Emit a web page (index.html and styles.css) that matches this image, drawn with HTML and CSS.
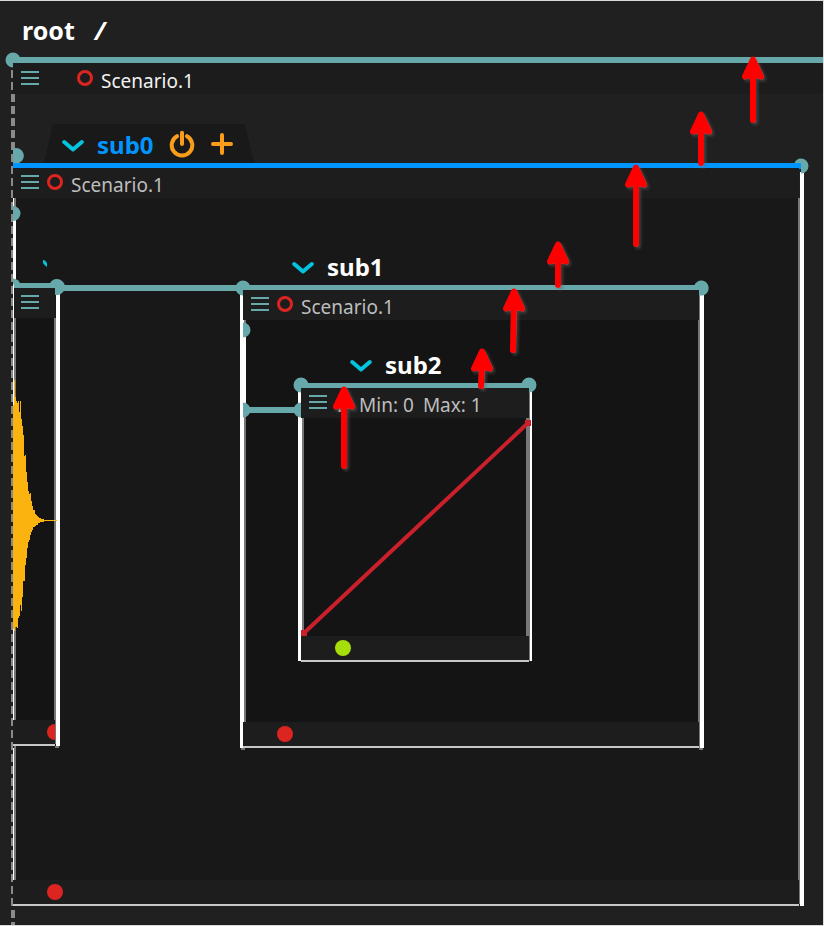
FILE: index.html
```html
<!DOCTYPE html>
<html lang="en">
<head>
<meta charset="utf-8">
<meta name="viewport" content="width=device-width, initial-scale=1">
<title>Scenario</title>
<link rel="stylesheet" href="styles.css">
</head>
<body>
<main class="app">
  <nav class="crumbs" aria-label="Path"><a href="#root">root</a><span>/</span></nav>

  <section class="root" id="root">
    <div class="rail"></div>
    <header class="head head-root">
      <button class="menu" aria-label="Menu"><i></i><i></i><i></i></button>
      <span class="ring"></span>
      <span class="name">Scenario.1</span>
    </header>
  </section>

  <div class="canvas">
    <article class="node sub0">
      <div class="tab tab-active">
        <button class="fold" aria-label="Fold sub0"><svg viewBox="0 0 22 14"><path d="M2.2 3 11 10.500 19.800 3"/></svg></button>
        <h2>sub0</h2>
        <button class="tool" aria-label="Power"><svg viewBox="0 0 26 28"><path d="M8 6.200A10.300 10.300 0 1 0 18 6.200M13 2.800V14"/></svg></button>
        <button class="tool" aria-label="Add"><svg viewBox="0 0 26 28"><path d="M4 14H22M13 5V23"/></svg></button>
      </div>
      <div class="rail rail-active"></div>
      <header class="head">
        <button class="menu" aria-label="Menu"><i></i><i></i><i></i></button>
        <span class="ring"></span>
        <span class="name">Scenario.1</span>
      </header>
      <div class="body"></div>
      <footer class="foot"><span class="led"></span></footer>
    </article>

    <article class="node sound">
      <div class="rail"></div>
      <header class="head">
        <button class="menu" aria-label="Menu"><i></i><i></i><i></i></button>
      </header>
      <div class="body body-deep"></div>
      <footer class="foot"><span class="led"></span></footer>
    </article>

    <article class="node sub1">
      <div class="tab">
        <button class="fold" aria-label="Fold sub1"><svg viewBox="0 0 22 14"><path d="M2.2 3 11 10.500 19.800 3"/></svg></button>
        <h2>sub1</h2>
      </div>
      <div class="rail"></div>
      <header class="head">
        <button class="menu" aria-label="Menu"><i></i><i></i><i></i></button>
        <span class="ring"></span>
        <span class="name">Scenario.1</span>
      </header>
      <div class="body body-deep"></div>
      <footer class="foot"><span class="led"></span></footer>
    </article>

    <article class="node sub2">
      <div class="tab">
        <button class="fold" aria-label="Fold sub2"><svg viewBox="0 0 22 14"><path d="M2.2 3 11 10.500 19.800 3"/></svg></button>
        <h2>sub2</h2>
      </div>
      <div class="rail"></div>
      <header class="head">
        <button class="menu" aria-label="Menu"><i></i><i></i><i></i></button>
        <span class="name range"><span>.</span><span>Min: 0</span><span>Max: 1</span></span>
      </header>
      <div class="body body-deep"></div>
      <footer class="foot"><span class="led led-ok"></span></footer>
    </article>

    <svg class="wires" width="824" height="926" aria-hidden="true">
      <defs>
        <filter id="shade" x="-50%" y="-20%" width="220%" height="150%">
          <feDropShadow dx="2" dy="2" stdDeviation="1.5" flood-color="#666" flood-opacity=".5"/>
        </filter>
        <path id="tip" d="M0 3.5-8 20.5Q0 18 8 20.5Z"/>
      </defs>

      <!-- time cursor -->
      <g stroke="#8a8a8a" stroke-dasharray="8 4">
        <path d="M12 70V906" stroke-width="2"/>
        <path d="M13 94V160M13 910V926" stroke-width="4"/>
      </g>

      <!-- state bars -->
      <g fill="#777" shape-rendering="crispEdges">
        <path d="M14 198h2v85h-2zM14 318h2v402h-2zM14 746h2v134h-2zM54 318h2v402h-2zM55 720h1v24h-1zM55 746h4v2h-4z"/>
        <path d="M244 320h2v402h-2zM698 320h2v402h-2zM699 290h1v458h-1zM241 748h4v2h-4zM699 748h4v2h-4z"/>
        <path d="M302 418h2v218h-2zM526 418h4v218h-4zM529 388h1v273h-1zM798 198h2v682h-2zM799 880h1v24h-1z"/>
      </g>
      <g fill="#fff" shape-rendering="crispEdges">
        <path d="M13 198h1v522h-1zM13 220h3v63h-3zM13 748h1v132h-1zM56 290h4v456h-4z"/>
        <path d="M240 293h3v455h-3zM243 320h1v402h-1zM243 337h3v72h-3zM700 294h4v454h-4z"/>
        <path d="M298 391h3v270h-3zM301 418h1v218h-1zM530 390h2v271h-2zM800 172h4v734h-4z"/>
      </g>

      <!-- links and handles -->
      <g fill="#67a9ab">
        <path d="M60 285H243V291H60zM246 407H301V413H246z"/>
        <path d="M13 60H20.500A7.500 7.500 0 1 0 13 67.500z"/>
        <path d="M13 148.500A7.500 7.500 0 0 1 19 163H13z"/>
        <path d="M13 206a7.500 7.500 0 0 1 0 15z"/>
        <path d="M13 278.500a7.500 7.500 0 0 1 7.500 6H13z"/>
        <path d="M50 283A8 8 0 1 1 55 294.700V288H50z"/>
        <path d="M243 295.500A7.500 7.500 0 1 1 250.500 288V290H243z"/>
        <path d="M699 295.200A7.500 7.500 0 1 0 694 286V290H699z"/>
        <path d="M801 158.500A7.500 7.500 0 0 1 801 173.500V163H794.500A7.500 7.500 0 0 1 801 158.500z"/>
        <path d="M301 392.500A7.500 7.500 0 1 1 308.500 385V388H301z"/>
        <path d="M529 392.500A7.500 7.500 0 1 0 521.500 385V388H529z"/>
        <path d="M243 322.500a7.500 7.500 0 0 1 0 15zM243 402.500a7.500 7.500 0 0 1 0 15zM301 402.500a7.500 7.500 0 0 0 0 15z"/>
      </g>
      <path fill="#0096ff" d="M799 163h2v6h-2z"/>
      <path fill="#03c3dd" d="M43 260 45 260.500 47 263V267L44.500 265 43 263z"/>

      <!-- waveform -->
      <path fill="#fbb40f" shape-rendering="crispEdges" d="M13 405h1V380h1V397h1V401h1V403h1V401h1V412h1V401h1V419h1V426h1V435h1V456h1V455h1V472h1V482h1V491h1V494h1V493h1V501h1V506h1V510h2V514h1V515h1V516h1V517h1V518h2V519h3V520H57V521H44V522H40V523H38V525H36V526H35V527H33V530H32V532H31V535H30V540H29V542H28V548H27V558H26V565H25V581H23V597H22V611H21V605H20V616H19V618H18V628H17V627H15V631H14V629H13z"/>

      <!-- automation curve -->
      <g fill="#cb202c">
        <path d="M301 630h6v6h-6zM525 420h6v6h-6z"/>
        <path d="M304 633 528 423" stroke="#cb202c" stroke-width="4"/>
      </g>

      <g class="arrows" filter="url(#shade)">
        <g transform="translate(753 56)"><use href="#tip"/><path d="M0 18V64"/></g>
        <g transform="translate(701 111)"><use href="#tip"/><path d="M0 18V52"/></g>
        <g transform="translate(636 164)"><use href="#tip"/><path d="M0 18V80"/></g>
        <g transform="translate(558 241)"><use href="#tip"/><path d="M0 18V44"/></g>
        <g transform="translate(514 288)"><use href="#tip"/><path d="M0 18-1 62"/></g>
        <g transform="translate(482 348)"><use href="#tip"/><path d="M0 18-1 38"/></g>
        <g transform="translate(344 386)"><use href="#tip"/><path d="M0 18V80"/></g>
      </g>
    </svg>
  </div>
</main>
</body>
</html>
```

FILE: styles.css
```css
* { box-sizing: border-box; }

body {
  margin: 0;
  background: #202020;
  color: #fff;
  font-family: "Noto Sans", "Open Sans", sans-serif;
}

button {
  padding: 0;
  border: 0;
  background: none;
  cursor: pointer;
}

.app {
  position: relative;
  min-height: 100vh;
  overflow: hidden;
}

.app::after {
  content: "";
  position: absolute;
  inset: 0;
  border: solid #dadcda;
  border-width: 1px 1px 1px 0;
  pointer-events: none;
}

.crumbs {
  display: flex;
  align-items: center;
  gap: 20px;
  height: 57px;
  padding: 3px 22px 0;
  font-size: 25px;
  font-weight: 700;
}

.crumbs span { font-style: italic; }

.crumbs a {
  color: inherit;
  text-decoration: none;
}

.root { margin-left: 13px; }

.rail {
  height: 5px;
  background: #67a9ab;
}

.root .rail { height: 6px; }

.rail-active { background: #0096ff; }

.head {
  display: flex;
  align-items: center;
  height: 30px;
  padding-left: 8px;
  overflow: hidden;
  background: #1d1d1d;
  color: #bdbdbd;
}

.head-root {
  height: 31px;
  background: #1c1c1c;
  color: #f2f2f2;
}

.menu {
  display: flex;
  flex: none;
  flex-direction: column;
  gap: 4px;
  width: 18px;
  margin-bottom: 2px;
}

.menu i {
  height: 2px;
  background: #67a9ab;
}

.ring {
  flex: none;
  width: 16px;
  height: 16px;
  margin: 0 8px 2px;
  border: 3px solid #dc2420;
  border-radius: 50%;
}

.head-root .ring { margin-left: 38px; }

.name {
  padding-top: 5px;
  font-size: 19px;
  line-height: 27px;
  white-space: nowrap;
}

.range {
  display: flex;
  gap: 9px;
  padding-left: 10px;
}

.range span:first-child { margin-right: 8px; }

.canvas {
  position: absolute;
  inset: 0;
}

.node {
  position: absolute;
  display: flex;
  flex-direction: column;
}

.sub0 { left: 13px; top: 163px; width: 786px; height: 743px; }
.sound { left: 13px; top: 283px; width: 42px; height: 463px; }
.sub1 { left: 243px; top: 285px; width: 456px; height: 463px; }
.sub2 { left: 301px; top: 383px; width: 228px; height: 279px; }

.body {
  flex: 1;
  background: #181818;
}

.body-deep { background: #141414; }

.foot {
  display: flex;
  align-items: center;
  height: 26px;
  padding-left: 34px;
  overflow: hidden;
  border-bottom: 2px solid #c8c8c8;
  background: #1d1d1d;
}

.led {
  flex: none;
  width: 16px;
  height: 16px;
  border-radius: 50%;
  background: #dc2420;
}

.led-ok { background: #a5de0b; }

.tab {
  position: absolute;
  bottom: 100%;
  left: 31px;
  display: flex;
  align-items: center;
  height: 39px;
  padding: 4px 20px 0 18px;
}

.tab-active {
  background: #191919;
  clip-path: polygon(9px 0, calc(100% - 10px) 0, 100% 100%, 0 100%);
}

.tab h2 {
  margin: 0 1px 2px 13px;
  font-size: 24px;
  font-weight: 700;
  line-height: 32px;
}

.tab-active h2 { color: #0096ff; }

.tab svg {
  display: block;
  fill: none;
  stroke-linecap: round;
  stroke-linejoin: round;
  stroke-width: 4px;
}

.fold svg {
  width: 22px;
  height: 14px;
  stroke: #03c3dd;
}

.tool { margin: 0 0 3px 14px; }

.tool svg {
  width: 26px;
  height: 28px;
  stroke: #f99d1b;
}

.wires {
  position: absolute;
  left: 0;
  top: 0;
  pointer-events: none;
}

.arrows {
  fill: #f00;
  stroke: #f00;
  stroke-linecap: round;
  stroke-linejoin: round;
  stroke-width: 6px;
}
```
